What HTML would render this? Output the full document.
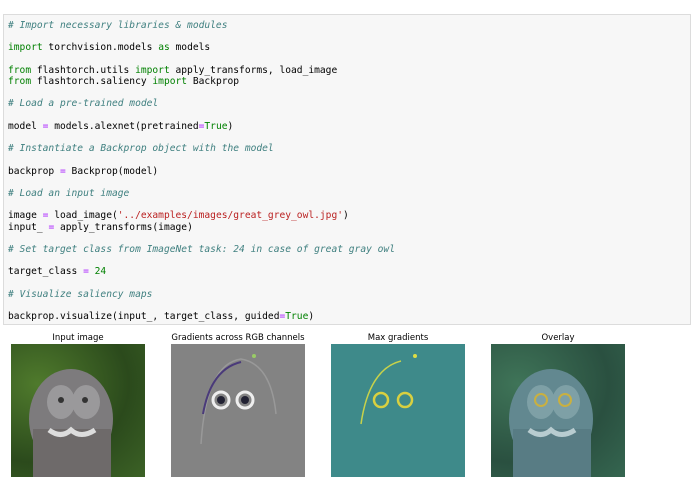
<!DOCTYPE html>
<html><head><meta charset="utf-8"><style>
body{margin:0;width:695px;height:494px;background:#fff;position:relative;overflow:hidden;font-family:"DejaVu Sans","Liberation Sans",sans-serif}
.code{position:absolute;left:3px;top:14px;width:686px;height:309px;background:#f7f7f7;border:1px solid #dcdcdc;}
pre{margin:0;position:absolute;left:4px;top:5px;font-family:"DejaVu Sans Mono","Liberation Mono",monospace;font-size:9.6px;line-height:11.2px;color:#000}
.c{color:#408080;font-style:italic}.k{color:#008000}.o{color:#aa22ff}.s{color:#ba2121}.n{color:#008000}
.t{position:absolute;top:333px;font-size:8.5px;color:#000;text-align:center;width:160px}
.im{position:absolute;top:344px;width:134px;height:133px;overflow:hidden}
</style></head><body>
<div class="code"><pre><span class="c"># Import necessary libraries &amp; modules</span>

<span class="k">import</span> torchvision.models <span class="k">as</span> models

<span class="k">from</span> flashtorch.utils <span class="k">import</span> apply_transforms, load_image
<span class="k">from</span> flashtorch.saliency <span class="k">import</span> Backprop

<span class="c"># Load a pre-trained model</span>

model <span class="o">=</span> models.alexnet(pretrained<span class="o">=</span><span class="k">True</span>)

<span class="c"># Instantiate a Backprop object with the model</span>

backprop <span class="o">=</span> Backprop(model)

<span class="c"># Load an input image</span>

image <span class="o">=</span> load_image(<span class="s">'../examples/images/great_grey_owl.jpg'</span>)
input_ <span class="o">=</span> apply_transforms(image)

<span class="c"># Set target class from ImageNet task: 24 in case of great gray owl</span>

target_class <span class="o">=</span> <span class="n">24</span>

<span class="c"># Visualize saliency maps</span>

backprop.visualize(input_, target_class, guided<span class="o">=</span><span class="k">True</span>)</pre></div>

<div class="t" style="left:-2px">Input image</div>
<div class="t" style="left:158px">Gradients across RGB channels</div>
<div class="t" style="left:318px">Max gradients</div>
<div class="t" style="left:478px">Overlay</div>

<div class="im" style="left:11px;background:radial-gradient(ellipse at 20% 30%,#4f7a2c,#2b4a1c 60%,#3c6226)">
<svg width="134" height="133"><ellipse cx="60" cy="75" rx="42" ry="50" fill="#7d7b7d"/><rect x="22" y="85" width="78" height="48" fill="#6e6a6a"/><ellipse cx="50" cy="58" rx="14" ry="17" fill="#9a999b"/><ellipse cx="75" cy="58" rx="14" ry="17" fill="#9a999b"/><circle cx="50" cy="56" r="3" fill="#333"/><circle cx="74" cy="56" r="3" fill="#333"/><path d="M38 86 Q50 95 60 86 Q70 95 84 86" stroke="#ddd" stroke-width="5" fill="none"/></svg></div>

<div class="im" style="left:171px;background:#838383">
<svg width="134" height="133"><path d="M30 100 Q35 20 70 15 Q100 20 105 70" stroke="#999" stroke-width="1.5" fill="none"/><path d="M32 70 Q40 25 70 18" stroke="#4a3a7a" stroke-width="2" fill="none"/><circle cx="50" cy="56" r="8" fill="none" stroke="#eee" stroke-width="3"/><circle cx="74" cy="56" r="8" fill="none" stroke="#eee" stroke-width="3"/><circle cx="50" cy="56" r="4" fill="#223"/><circle cx="74" cy="56" r="4" fill="#223"/><circle cx="83" cy="12" r="2" fill="#9c6"/></svg></div>

<div class="im" style="left:331px;background:#3e8a8a">
<svg width="134" height="133"><path d="M30 80 Q38 25 70 17" stroke="#c8d24a" stroke-width="1.5" fill="none"/><circle cx="50" cy="56" r="7" fill="none" stroke="#d8d040" stroke-width="2.5"/><circle cx="74" cy="56" r="7" fill="none" stroke="#d8d040" stroke-width="2.5"/><circle cx="84" cy="12" r="2" fill="#dd4"/></svg></div>

<div class="im" style="left:491px;background:radial-gradient(ellipse at 20% 30%,#3f7458,#2a5040 60%,#356650)">
<svg width="134" height="133"><ellipse cx="60" cy="75" rx="42" ry="50" fill="#628890"/><rect x="22" y="85" width="78" height="48" fill="#587c84"/><ellipse cx="50" cy="58" rx="14" ry="17" fill="#7ea0a6"/><ellipse cx="75" cy="58" rx="14" ry="17" fill="#7ea0a6"/><circle cx="50" cy="56" r="6" fill="none" stroke="#c9b040" stroke-width="2"/><circle cx="74" cy="56" r="6" fill="none" stroke="#c9b040" stroke-width="2"/><path d="M38 86 Q50 95 60 86 Q70 95 84 86" stroke="#b8ccd0" stroke-width="5" fill="none"/></svg></div>
</body></html>
